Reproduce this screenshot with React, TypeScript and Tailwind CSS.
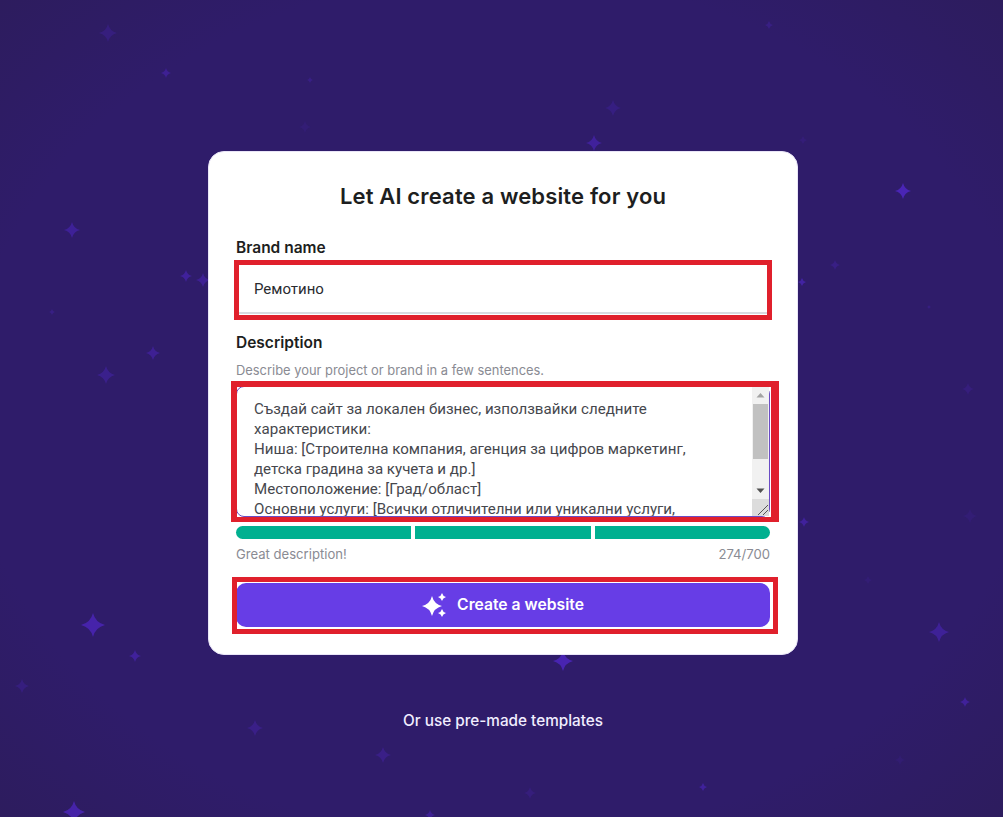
const STARS = [
  [108, 33, 9, 0.3], [166, 73, 5, 0.55], [310, 80, 3, 0.35], [305, 127, 6, 0.15], [72, 230, 8, 0.6],
  [186, 276, 6, 0.65], [203, 280, 7, 0.55], [52, 312, 3, 0.35], [153, 353, 7, 0.55], [106, 375, 9, 0.45],
  [93, 625, 12, 0.85], [135, 656, 6, 0.65], [22, 686, 7, 0.3], [255, 728, 8, 0.4], [74, 812, 11, 0.85],
  [769, 25, 4, 0.35], [903, 191, 8, 1], [803, 140, 4, 0.2], [835, 265, 5, 0.35], [802, 282, 4, 0.75],
  [929, 307, 2, 0.35], [968, 389, 6, 0.25], [804, 522, 5, 0.65], [970, 516, 7, 0.15], [868, 580, 4, 0.15],
  [939, 632, 10, 0.6], [965, 702, 5, 0.65], [900, 760, 5, 0.15], [703, 787, 4, 0.65], [613, 108, 8, 0.3],
  [594, 143, 8, 0.65], [563, 661, 10, 0.95], [383, 755, 8, 0.4], [530, 793, 6, 0.25], [430, 815, 5, 0.55],
];

function starPath(x: number, y: number, r: number) {
  const k = r * 0.2;
  return `M${x} ${y - r}Q${x + k} ${y - k} ${x + r} ${y}Q${x + k} ${y + k} ${x} ${y + r}Q${x - k} ${y + k} ${x - r} ${y}Q${x - k} ${y - k} ${x} ${y - r}Z`;
}

function Sparkles() {
  return (
    <svg width="25" height="24" viewBox="0 0 25 24" fill="white" className="shrink-0">
      <path d={starPath(10, 13, 10)} />
      <path d={starPath(20, 4, 4)} />
      <path d={starPath(20, 20, 4)} />
    </svg>
  );
}

function RedBox({ className }: { className: string }) {
  return <div className={`absolute pointer-events-none border-solid border-[#e0202c] ${className}`} />;
}

const DESCRIPTION = `Създай сайт за локален бизнес, използвайки следните характеристики:
Ниша: [Строителна компания, агенция за цифров маркетинг, детска градина за кучета и др.]
Местоположение: [Град/област]
Основни услуги: [Всички отличителни или уникални услуги,`;

export default function App() {
  return (
    <div className="relative h-screen overflow-hidden bg-[#2f1c6a] bg-[radial-gradient(ellipse_at_center,#2f1c6a_75%,#2d1c5e_100%)] font-['Inter',sans-serif]">
      <svg className="absolute inset-0 w-full h-full blur-[0.5px]" viewBox="0 0 1003 817">
        {STARS.map(([x, y, r, o]) => (
          <path key={`${x}-${y}`} d={starPath(x, y, r)} fill="#4a25b5" opacity={o} />
        ))}
      </svg>

      <div className="relative flex flex-col items-center pt-[151px] pl-[3px]">
        <div className="w-[590px] bg-white rounded-[16px] border border-[#e9e5f7] px-[27px] pt-[30px] pb-[27px]">
          <h1 className="text-[22px] leading-[28px] font-semibold text-[#1d1e20] text-center mb-[28px] tracking-[0.15px]">
            Let AI create a website for you
          </h1>

          <label className="block text-[15.5px] leading-[20px] font-semibold text-[#1d1e20]">Brand name</label>
          <div className="relative mt-[4px] h-[52px]">
            <input
              readOnly
              value="Ремотино"
              className="w-full h-full px-[18px] pt-[3px] border-b-2 border-[#d8dae0] outline-none text-[15px] text-[#2a2b30] font-['Roboto',sans-serif]"
            />
            <RedBox className="-left-[2px] -right-[2px] -top-[2px] -bottom-[6px] border-[5px]" />
          </div>

          <label className="block mt-[19px] text-[15.5px] leading-[20px] font-semibold text-[#1d1e20]">Description</label>
          <p className="mt-[8px] text-[12.9px] leading-[20px] text-[#8a8b93]">Describe your project or brand in a few sentences.</p>

          <div className="relative mt-[5px] h-[131px]">
            <textarea
              readOnly
              defaultValue={DESCRIPTION}
              className="block w-full h-full resize-none overflow-hidden rounded-[8px] border border-[#6a4cc4] pl-[17px] pr-[40px] pt-[12px] text-[15.1px] leading-[20px] text-[#46474d] outline-none font-['Roboto',sans-serif]"
            />
            <div className="absolute top-[1px] bottom-[1px] right-[1px] w-[17px] flex flex-col bg-[#f1f1f1]">
              <svg width="17" height="17" viewBox="0 0 17 17" className="shrink-0">
                <path d="M8.5 6 L12.5 10.5 H4.5 Z" fill="#a3a3a3" />
              </svg>
              <div className="h-[55px] mx-[1px] bg-[#c1c1c1] shrink-0" />
              <div className="flex-1" />
              <svg width="17" height="17" viewBox="0 0 17 17" className="shrink-0">
                <path d="M8.5 11 L12.5 6.5 H4.5 Z" fill="#505050" />
              </svg>
              <svg width="17" height="17" viewBox="0 0 17 17" className="shrink-0 bg-[#dcdcdc]">
                <path d="M16 6 L6 16 M16 11 L11 16" stroke="#555" strokeWidth="1" />
              </svg>
            </div>
            <RedBox className="-left-[5px] -right-[9px] -top-[5px] -bottom-[5px] border-[5px] border-l-[6px] border-t-[6px] border-r-[8px]" />
          </div>

          <div className="flex gap-[4px] mt-[9px]">
            <div className="h-[13px] flex-1 bg-[#00b090] rounded-l-full" />
            <div className="h-[13px] flex-1 bg-[#00b090]" />
            <div className="h-[13px] flex-1 bg-[#00b090] rounded-r-full" />
          </div>

          <div className="flex justify-between mt-[7px] text-[13.1px] leading-[16px] text-[#8a8b93]">
            <span>Great description!</span>
            <span>274/700</span>
          </div>

          <div className="relative mt-[21px] h-[44px]">
            <button className="w-full h-full flex items-center justify-center gap-[10px] rounded-[10px] bg-[#673de6] text-white text-[15.7px] font-semibold">
              <Sparkles />
              Create a website
            </button>
            <RedBox className="-left-[4px] -right-[8px] -top-[6px] -bottom-[7px] border-[5px]" />
          </div>
        </div>

        <a className="mt-[56px] text-[15.3px] leading-[20px] font-medium text-[#f1edff]">Or use pre-made templates</a>
      </div>
    </div>
  );
}
